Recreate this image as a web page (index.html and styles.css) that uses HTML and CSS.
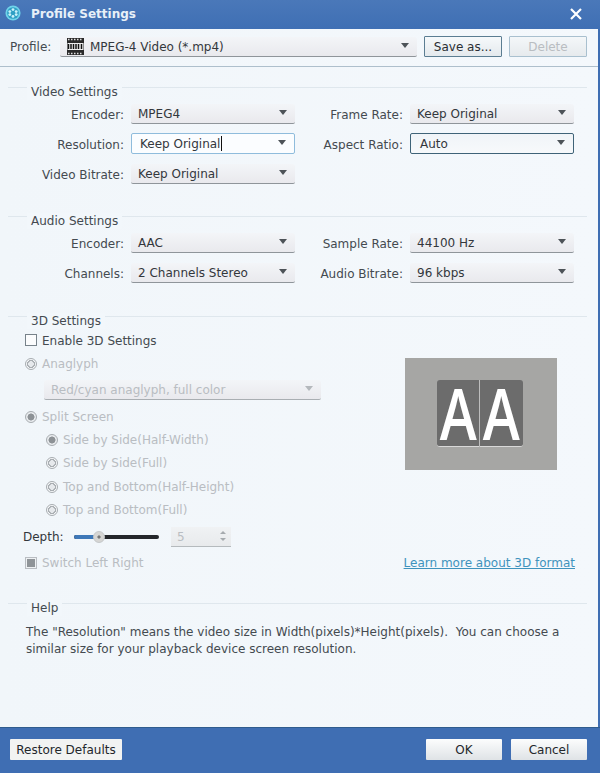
FILE: index.html
```html
<!DOCTYPE html>
<html lang="en">
<head>
<meta charset="utf-8">
<title>Profile Settings</title>
<link rel="stylesheet" href="styles.css">
</head>
<body>
<div class="window">
  <header class="titlebar">
    <svg class="logo" viewBox="0 0 18 18" width="16" height="16">
      <circle cx="9" cy="9" r="8.5" fill="#6fd3ea"/>
      <circle cx="9" cy="9" r="6.6" fill="#2f9fc4"/>
      <circle cx="9" cy="5.2" r="1.6" fill="#c8f2fb"/>
      <circle cx="9" cy="12.8" r="1.6" fill="#c8f2fb"/>
      <circle cx="5.4" cy="7.4" r="1.6" fill="#c8f2fb"/>
      <circle cx="12.6" cy="7.4" r="1.6" fill="#c8f2fb"/>
      <circle cx="5.4" cy="10.8" r="1.6" fill="#c8f2fb"/>
      <circle cx="12.6" cy="10.8" r="1.6" fill="#c8f2fb"/>
    </svg>
    <span class="title">Profile Settings</span>
    <svg class="close" viewBox="0 0 12 12" width="12" height="12">
      <path d="M1 1L11 11M11 1L1 11" stroke="#fff" stroke-width="2.2" fill="none"/>
    </svg>
  </header>

  <div class="content">
    <div class="profile-row">
      <span class="profile-label">Profile:</span>
      <div class="select profile-select">
        <svg class="mpeg" viewBox="0 0 17 17" width="17" height="17">
          <rect x="0" y="0" width="17" height="17" fill="#2a2a2a"/>
          <path d="M1 1.5h1.5M4 1.5h1.5M7 1.5h1.5M10 1.5h1.5M13 1.5h1.5M1 15.5h1.5M4 15.5h1.5M7 15.5h1.5M10 15.5h1.5M13 15.5h1.5" stroke="#ddd" stroke-width="1.4" fill="none"/>
          <rect x="0.5" y="5" width="16" height="7" fill="#eee"/>
          <path d="M1.5 6v5M4 6v5M6.500 6v5M9 6v5M11.500 6v5M14.500 6v5" stroke="#111" stroke-width="1.5" fill="none"/>
        </svg>
        <span class="value">MPEG-4 Video (*.mp4)</span>
        <i class="arrow"></i>
      </div>
      <button class="btn save">Save as...</button>
      <button class="btn delete">Delete</button>
    </div>

    <section class="group video">
      <h2 class="legend">Video Settings</h2>
      <div class="form">
        <label class="lbl">Encoder:</label>
        <div class="select"><span class="value">MPEG4</span><i class="arrow"></i></div>
        <label class="lbl">Frame Rate:</label>
        <div class="select"><span class="value">Keep Original</span><i class="arrow"></i></div>
        <label class="lbl">Resolution:</label>
        <div class="select editing"><span class="value caret">Keep Original</span><i class="arrow"></i></div>
        <label class="lbl">Aspect Ratio:</label>
        <div class="select focused"><span class="value">Auto</span><i class="arrow"></i></div>
        <label class="lbl">Video Bitrate:</label>
        <div class="select"><span class="value">Keep Original</span><i class="arrow"></i></div>
      </div>
    </section>

    <section class="group audio">
      <h2 class="legend">Audio Settings</h2>
      <div class="form">
        <label class="lbl">Encoder:</label>
        <div class="select"><span class="value">AAC</span><i class="arrow"></i></div>
        <label class="lbl">Sample Rate:</label>
        <div class="select"><span class="value">44100 Hz</span><i class="arrow"></i></div>
        <label class="lbl">Channels:</label>
        <div class="select"><span class="value">2 Channels Stereo</span><i class="arrow"></i></div>
        <label class="lbl">Audio Bitrate:</label>
        <div class="select"><span class="value">96 kbps</span><i class="arrow"></i></div>
      </div>
    </section>

    <section class="group three-d">
      <h2 class="legend">3D Settings</h2>
      <div class="three-d-body">
        <div class="three-d-left">
          <div class="opt enable"><i class="check"></i><span>Enable 3D Settings</span></div>
          <div class="opt off anaglyph"><i class="radio"></i><span>Anaglyph</span></div>
          <div class="select disabled anaglyph-select"><span class="value">Red/cyan anaglyph, full color</span><i class="arrow"></i></div>
          <div class="opt off split"><i class="radio on"></i><span>Split Screen</span></div>
          <div class="opt off sub first"><i class="radio on"></i><span>Side by Side(Half-Width)</span></div>
          <div class="opt off sub"><i class="radio"></i><span>Side by Side(Full)</span></div>
          <div class="opt off sub"><i class="radio"></i><span>Top and Bottom(Half-Height)</span></div>
          <div class="opt off sub"><i class="radio"></i><span>Top and Bottom(Full)</span></div>
          <div class="depth">
            <span class="depth-label">Depth:</span>
            <div class="slider"><i class="fill"></i><i class="thumb"></i></div>
            <div class="spin"><span>5</span><i class="spin-up"></i><i class="spin-down"></i></div>
          </div>
          <div class="opt off switch"><i class="check filled"></i><span>Switch Left Right</span></div>
        </div>
        <div class="three-d-right">
          <div class="preview">
            <div class="aa">
              <div class="aa-panel"><span>A</span></div>
              <div class="aa-panel"><span>A</span></div>
            </div>
          </div>
          <a class="learn" href="#">Learn more about 3D format</a>
        </div>
      </div>
    </section>

    <section class="group help">
      <h2 class="legend">Help</h2>
      <p class="help-text">The "Resolution" means the video size in Width(pixels)*Height(pixels).&nbsp; You can choose a similar size for your playback device screen resolution.</p>
    </section>
  </div>

  <footer class="footer">
    <button class="btn foot restore">Restore Defaults</button>
    <span class="spacer"></span>
    <button class="btn foot ok">OK</button>
    <button class="btn foot cancel">Cancel</button>
  </footer>
</div>
</body>
</html>
```

FILE: styles.css
```css
* { box-sizing: border-box; }
html, body { margin: 0; height: 100%; }
body {
  font-family: "DejaVu Sans", "Liberation Sans", sans-serif;
  font-size: 12px;
  color: #444a50;
  overflow: hidden;
}
.window {
  width: 600px;
  height: 773px;
  display: flex;
  flex-direction: column;
  background: #3f6eb3;
}
.titlebar {
  height: 29px;
  flex: none;
  display: flex;
  align-items: center;
  padding: 0 18px 2px 5px;
  background: linear-gradient(#4a78b9, #3f6fb4);
}
.logo { flex: none; margin-bottom: 2px; }
.title {
  margin-left: 10px;
  font-size: 12px;
  font-weight: bold;
  color: #e8f0f8;
  flex: 1;
}
.close { flex: none; }

.content {
  flex: 1;
  margin: 0 2px 0 0;
  background: linear-gradient(90deg, #f1f6fa, #f4f8fc);
  padding-top: 1px;
  min-height: 0;
}
.profile-row {
  height: 37px;
  display: flex;
  align-items: center;
  padding: 0 11px 3px 10px;
  border-bottom: 1px solid #aebfcc;
}
.profile-label { width: 50px; flex: none; padding-top: 1px; }
.profile-select { width: 357px; flex: none; height: 20px; }
.mpeg { margin-left: 7px; margin-right: 6px; flex: none; }
.profile-select .value { padding-left: 0; }

.btn {
  font: inherit;
  color: #2a2e33;
  height: 21px;
  padding: 0;
  border-radius: 1px;
  cursor: default;
}
.save {
  width: 78px;
  margin-left: 7px;
  background: linear-gradient(#f6f9fb, #e4e9ed);
  border: 1px solid #5b7d92;
}
.delete {
  width: 78px;
  margin-left: 7px;
  color: #b9bdc1;
  background: linear-gradient(#f4f7f9, #e6eaed);
  border: 1px solid #a9c0cf;
}

.group {
  margin: 0 11px 0 8px;
  border-top: 1px solid #dfe7ed;
}
.video { margin-top: 20px; height: 129px; }
.audio { height: 100px; }
.three-d { height: 287px; }
.legend {
  display: block;
  width: fit-content;
  margin: -4px 0 0 19px;
  padding: 0 4px;
  font-size: 12px;
  font-weight: normal;
  line-height: 16px;
  color: #444a50;
  background: #f2f7fb;
}

.form {
  margin-top: 4px;
  display: grid;
  grid-template-columns: 116px 164px 101px 164px;
  grid-auto-rows: 20px;
  row-gap: 10px;
  column-gap: 7px;
  align-items: center;
}
.lbl { text-align: right; padding-top: 1px; }

.select {
  position: relative;
  height: 20px;
  display: flex;
  align-items: center;
  background: linear-gradient(#f3f5f8, #e9e9ed);
  border-bottom: 1px solid #8f959a;
  border-radius: 3px 3px 2px 2px;
  color: #33373c;
}
.value { padding-left: 7px; padding-top: 1px; white-space: nowrap; }
.arrow {
  position: absolute;
  right: 8px;
  top: 6px;
  width: 0;
  height: 0;
  border-left: 4px solid transparent;
  border-right: 4px solid transparent;
  border-top: 5px solid #4d5358;
}
.editing {
  height: 21px;
  margin-top: -1px;
  background: #fbfdff;
  border: 1px solid #8fbcdc;
  border-radius: 2px;
}
.editing .value { padding-left: 8px; }
.caret { border-right: 1px solid #111; padding-right: 1px; line-height: 14px; }
.focused {
  height: 21px;
  margin-top: -1px;
  background: linear-gradient(#f0f4f8, #f7f9fb);
  border: 1px solid #3f6378;
  border-radius: 2px;
}
.focused .value { padding-left: 9px; }
.disabled { color: #b9bdc2; border-bottom-color: #a9aeb2; }
.disabled .arrow { border-top-color: #b4b8bc; }

.three-d-body { display: flex; }
.three-d-left { width: 390px; flex: none; }
.three-d-right { width: 177px; flex: none; display: flex; flex-direction: column; align-items: flex-end; }

.opt {
  height: 20px;
  display: flex;
  align-items: center;
  padding-left: 17px;
  white-space: nowrap;
}
.opt span { margin-left: 5px; }
.enable { margin-top: 1px; }
.enable span { padding-top: 1px; }
.anaglyph { margin-top: 4px; }
.anaglyph-select { margin: 6px 0 0 36px; width: 277px; }
.split { margin-top: 7px; }
.sub { padding-left: 38px; margin-top: 3.400px; }
.sub.first { margin-top: 3px; }
.off { color: #b9bdc2; }

.check {
  width: 12px;
  height: 12px;
  flex: none;
  background: #fbfcfd;
  border: 1px solid #77828a;
}
.check.filled {
  background: #8f9498;
  border: 2px solid #eef1f3;
  outline: 1px solid #b9bdc2;
  outline-offset: -1px;
}
.radio {
  width: 12px;
  height: 12px;
  flex: none;
  border-radius: 50%;
  border: 1px solid #a8adb1;
  background: radial-gradient(circle, #e6e9ec 0 2.600px, #a8adb1 3px 3.800px, #f4f6f8 4.200px);
}
.radio.on {
  background: radial-gradient(circle, #8d9296 0 3.200px, #e8ebee 3.800px);
}

.depth {
  margin-top: 7px;
  height: 20px;
  display: flex;
  align-items: center;
  padding-left: 15px;
}
.depth-label { width: 51px; flex: none; color: #33373c; }
.slider {
  position: relative;
  width: 85px;
  height: 4px;
  flex: none;
  background: #24272b;
  border-radius: 2px;
}
.fill {
  position: absolute;
  left: 0;
  top: 0;
  width: 25px;
  height: 4px;
  background: #3e78b8;
  border-radius: 2px 0 0 2px;
}
.thumb {
  position: absolute;
  left: 19px;
  top: -4px;
  width: 12px;
  height: 12px;
  border-radius: 50%;
  border: 1px solid #c4c7c9;
  background: radial-gradient(circle, #777 0 1.200px, #d6d6d4 2px);
}
.spin {
  position: relative;
  margin-left: 12px;
  width: 60px;
  height: 20px;
  flex: none;
  display: flex;
  align-items: center;
  padding-left: 6px;
  color: #b9bdc2;
  background: linear-gradient(#f0f2f4, #e8eaec);
  border-bottom: 1px solid #b5babd;
}
.spin-up, .spin-down {
  position: absolute;
  right: 5px;
  width: 0;
  height: 0;
  border-left: 3px solid transparent;
  border-right: 3px solid transparent;
}
.spin-up { top: 4px; border-bottom: 3px solid #a5aaae; }
.spin-down { top: 11px; border-top: 3px solid #a5aaae; }
.switch { margin-top: 6px; }

.preview {
  margin-top: 29px;
  width: 152px;
  height: 112px;
  padding: 22px 0 0 32px;
  background: #a6a6a4;
  align-self: flex-start;
  margin-left: 7px;
}
.aa { display: flex; width: 86px; }
.aa-panel {
  width: 43px;
  height: 67px;
  background: #6c6c6c;
  display: flex;
  align-items: center;
  justify-content: center;
  border-bottom: 1px solid #d9d9d9;
}
.aa-panel:first-child { border-right: 1px solid #bdbdbd; border-radius: 3px 0 0 3px; }
.aa-panel:last-child { border-radius: 0 3px 3px 0; }
.aa-panel span {
  display: block;
  font-family: "Open Sans", sans-serif;
  font-weight: 600;
  font-size: 70px;
  line-height: 67px;
  color: #fff;
  transform: scaleX(.8);
}
.learn {
  margin-top: 83px;
  line-height: 20px;
  color: #3f93bd;
  text-decoration: underline;
  white-space: nowrap;
}

.help-text {
  margin: 8px 0 0 18px;
  width: 555px;
  line-height: 17px;
  color: #444a50;
}

.footer {
  height: 46px;
  flex: none;
  display: flex;
  align-items: flex-start;
  padding: 11px 13px 0 10px;
  background: #3f6eb3;
  border-top: 1px solid #2f5c8e;
}
.spacer { flex: 1; }
.foot {
  height: 21px;
  border: none;
  background: linear-gradient(#fcfdfd, #dfe3e6);
  color: #23272b;
}
.restore { width: 112px; background: #f2f3f2; }
.ok { width: 76px; }
.cancel { width: 76px; margin-left: 9px; }
```
